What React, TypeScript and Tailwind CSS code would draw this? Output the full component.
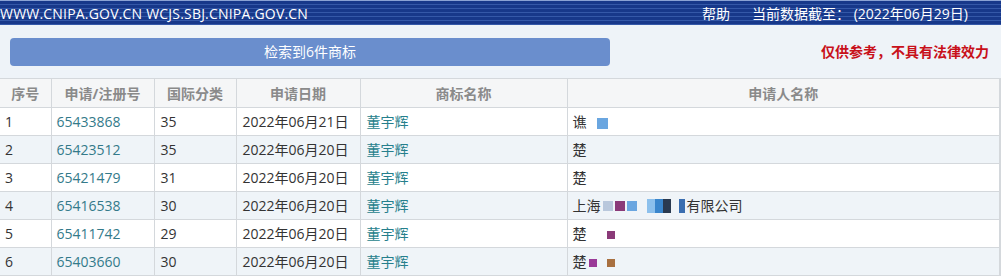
import React from "react";

type Row = {
  no: number;
  regNo: string;
  cls: string;
  date: string;
  mark: string;
  applicant: React.ReactNode;
};

function Blot({ c }: { c: string }) {
  return <span className={`inline-block h-[10px] w-[10px] align-middle ${c}`} />;
}

const rows: Row[] = [
  {
    no: 1,
    regNo: "65433868",
    cls: "35",
    date: "2022年06月21日",
    mark: "董宇辉",
    applicant: (
      <>
        谯
        <span className="ml-[10px] inline-block h-[11px] w-[11px] bg-[#6aa6e0] align-middle" />
      </>
    ),
  },
  {
    no: 2,
    regNo: "65423512",
    cls: "35",
    date: "2022年06月20日",
    mark: "董宇辉",
    applicant: <>楚</>,
  },
  {
    no: 3,
    regNo: "65421479",
    cls: "31",
    date: "2022年06月20日",
    mark: "董宇辉",
    applicant: <>楚</>,
  },
  {
    no: 4,
    regNo: "65416538",
    cls: "30",
    date: "2022年06月20日",
    mark: "董宇辉",
    applicant: (
      <span className="inline-flex items-center">
        上海
        <span className="ml-[2px] flex gap-[2px]">
          <Blot c="bg-[#b9c8dc]" />
          <Blot c="bg-[#8a3a78]" />
          <Blot c="bg-[#6aa6e0]" />
        </span>
        <span className="ml-[10px] flex">
          <span className="h-[14px] w-[8px] bg-[#8cc0ec]" />
          <span className="h-[14px] w-[8px] bg-[#3a86cc]" />
          <span className="h-[14px] w-[8px] bg-[#2a3a50]" />
        </span>
        <span className="ml-[8px] h-[14px] w-[6px] bg-[#3a6eb0]" />
        <span className="ml-[2px]">有限公司</span>
      </span>
    ),
  },
  {
    no: 5,
    regNo: "65411742",
    cls: "29",
    date: "2022年06月20日",
    mark: "董宇辉",
    applicant: (
      <>
        楚
        <span className="ml-[20px] inline-block h-[8px] w-[8px] bg-[#8a3a78] align-middle" />
      </>
    ),
  },
  {
    no: 6,
    regNo: "65403660",
    cls: "30",
    date: "2022年06月20日",
    mark: "董宇辉",
    applicant: (
      <>
        楚
        <span className="ml-[2px] inline-block h-[8px] w-[8px] bg-[#9a3a98] align-middle" />
        <span className="ml-[10px] inline-block h-[8px] w-[8px] bg-[#a87040] align-middle" />
      </>
    ),
  },
];

export default function App() {
  return (
    <div className="h-[276px] w-[1001px] overflow-hidden bg-white font-['Open_Sans','Noto_Sans_CJK_SC',sans-serif] text-[14px]">
      <div className="flex h-[25px] items-center justify-between border-t border-[#8aa2d4] bg-[repeating-linear-gradient(to_bottom,#17388a_0px,#17388a_3px,#3458a8_3px,#3458a8_4px)] pr-[33px] text-white">
        <span className="tracking-[0.2px]">WWW.CNIPA.GOV.CN WCJS.SBJ.CNIPA.GOV.CN</span>
        <div className="flex gap-[22px]">
          <span>帮助</span>
          <span>当前数据截至： (2022年06月29日)</span>
        </div>
      </div>

      <div className="flex h-[53px] items-center justify-between bg-[#eef3f8] pl-[10px] pr-[12px]">
        <div className="flex h-[28px] w-[600px] items-center justify-center rounded-[4px] bg-[#6a8ecd] text-white">
          检索到6件商标
        </div>
        <span className="font-bold text-[#c8101a]">仅供参考，不具有法律效力</span>
      </div>

      <table className="w-[1001px] table-fixed border-collapse">
        <colgroup>
          <col className="w-[51px]" />
          <col className="w-[103px]" />
          <col className="w-[82px]" />
          <col className="w-[124px]" />
          <col className="w-[207px]" />
          <col />
        </colgroup>
        <thead>
          <tr className="h-[29px] bg-[#f5f6f7] text-[#8a8a8a]">
            <th className="border border-l-0 border-[#d4d8dc] font-bold">序号</th>
            <th className="border border-[#d4d8dc] font-bold">申请/注册号</th>
            <th className="border border-[#d4d8dc] font-bold">国际分类</th>
            <th className="border border-[#d4d8dc] font-bold">申请日期</th>
            <th className="border border-[#d4d8dc] font-bold">商标名称</th>
            <th className="border border-r-2 border-[#d4d8dc] font-bold">申请人名称</th>
          </tr>
        </thead>
        <tbody>
          {rows.map((r, i) => (
            <tr
              key={r.no}
              className={`h-[28px] text-[#333] ${i % 2 === 1 ? "bg-[#eff4f8]" : "bg-white"}`}
            >
              <td className="border border-l-0 border-[#d4d8dc] pl-[5px]">{r.no}</td>
              <td className="border border-[#d4d8dc] pl-[5px] text-[#337a8a]">{r.regNo}</td>
              <td className="border border-[#d4d8dc] pl-[6px]">{r.cls}</td>
              <td className="border border-[#d4d8dc] pl-[6px]">{r.date}</td>
              <td className="border border-[#d4d8dc] pl-[6px] text-[#267f8c]">{r.mark}</td>
              <td className="border border-r-2 border-[#d4d8dc] pl-[5px]">{r.applicant}</td>
            </tr>
          ))}
        </tbody>
      </table>
    </div>
  );
}
